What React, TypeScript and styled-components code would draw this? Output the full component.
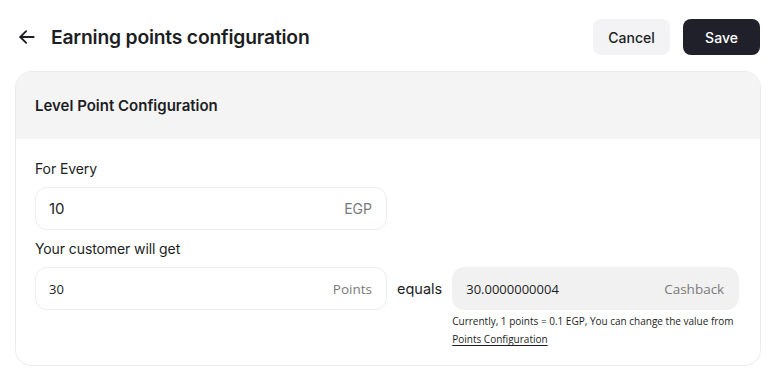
import * as React from 'react';
import styled, { createGlobalStyle } from 'styled-components';

const GlobalStyle = createGlobalStyle`
  body {
    margin: 0;
    background: #fff;
    font-family: Inter, "Liberation Sans", sans-serif;
    color: #1d1e24;
  }
`;

const Page = styled.div`
  width: 774px;
  padding: 19px 14px 0 15px;
  box-sizing: border-box;
`;

const TopBar = styled.div`
  display: flex;
  align-items: center;
  justify-content: space-between;
  height: 36px;
`;

const TitleGroup = styled.div`
  display: flex;
  align-items: center;
  gap: 14px;
  padding-left: 2px;
`;

const Title = styled.h1`
  margin: 0;
  font-size: 19.3px;
  font-weight: 600;
  letter-spacing: -0.2px;
  color: #1d1e24;
`;

const Actions = styled.div`
  display: flex;
  gap: 13px;
`;

const Button = styled.button<{ $primary?: boolean }>`
  width: 77px;
  height: 36px;
  border: none;
  border-radius: 8px;
  font-family: Inter, "Liberation Sans", sans-serif;
  font-size: 14px;
  font-weight: 500;
  cursor: pointer;
  background: ${(p) => (p.$primary ? '#1f2029' : '#f3f3f5')};
  color: ${(p) => (p.$primary ? '#ffffff' : '#1d1e24')};
`;

const Card = styled.div`
  margin-top: 16px;
  width: 746px;
  border: 1px solid #ececec;
  border-radius: 16px;
  overflow: hidden;
  box-sizing: border-box;
`;

const CardHeader = styled.div`
  background: #f4f4f4;
  height: 67px;
  display: flex;
  align-items: center;
  padding-left: 19px;
  font-size: 15px;
  font-weight: 600;
  color: #1d1e24;
`;

const CardBody = styled.div`
  padding: 21px 20px 17px 19px;
  display: flex;
  flex-direction: column;
`;

const Label = styled.div`
  font-size: 14px;
  color: #1d1e24;
  margin-bottom: 9px;
  line-height: 18px;
  letter-spacing: -0.1px;
`;

const Field = styled.div<{ $filled?: boolean; $w: number }>`
  width: ${(p) => p.$w}px;
  flex-shrink: 0;
  height: 43px;
  box-sizing: border-box;
  border-radius: 12px;
  border: 1px solid ${(p) => (p.$filled ? '#f1f1f1' : '#ececec')};
  background: ${(p) => (p.$filled ? '#f1f1f1' : '#fff')};
  display: flex;
  align-items: center;
  justify-content: space-between;
  padding: 0 14px 0 13px;
`;

const Value = styled.span<{ $small?: boolean }>`
  font-size: ${(p) => (p.$small ? '13px' : '15px')};
  font-family: ${(p) => (p.$small ? '"Open Sans", sans-serif' : 'Inter, sans-serif')};
  color: #1d1e24;
`;

const Suffix = styled.span<{ $small?: boolean }>`
  font-size: ${(p) => (p.$small ? '13.5px' : '14px')};
  font-family: ${(p) => (p.$small ? '"Open Sans", sans-serif' : 'Inter, sans-serif')};
  color: #7a7a7a;
`;

const FieldGroup = styled.div`
  display: flex;
  flex-direction: column;
  margin-bottom: 10px;
`;

const Row = styled.div`
  display: flex;
  align-items: flex-start;
  gap: 10px;
`;

const Equals = styled.span`
  height: 43px;
  display: flex;
  align-items: center;
  font-size: 14.5px;
  color: #1d1e24;
`;

const ResultCol = styled.div`
  display: flex;
  flex-direction: column;
`;

const Help = styled.div`
  margin-top: 2px;
  font-family: "Open Sans", sans-serif;
  font-size: 10px;
  line-height: 18px;
  color: #1d1e24;
  white-space: nowrap;
`;

const HelpLink = styled.a`
  color: #1d1e24;
  text-decoration: underline;
  text-underline-offset: 2px;
`;

const BackIcon = () => (
  <svg width="20" height="20" viewBox="0 0 24 24" fill="none" stroke="#1d1e24" strokeWidth="2.2" strokeLinecap="round" strokeLinejoin="round">
    <path d="M20 12H4" />
    <path d="M11 5l-7 7 7 7" />
  </svg>
);

export default function App() {
  return (
    <Page>
      <GlobalStyle />
      <TopBar>
        <TitleGroup>
          <BackIcon />
          <Title>Earning points configuration</Title>
        </TitleGroup>
        <Actions>
          <Button>Cancel</Button>
          <Button $primary>Save</Button>
        </Actions>
      </TopBar>
      <Card>
        <CardHeader>Level Point Configuration</CardHeader>
        <CardBody>
          <FieldGroup>
            <Label>For Every</Label>
            <Field $w={352}>
              <Value>10</Value>
              <Suffix>EGP</Suffix>
            </Field>
          </FieldGroup>
          <Label>Your customer will get</Label>
          <Row>
            <Field $w={352}>
              <Value $small>30</Value>
              <Suffix $small>Points</Suffix>
            </Field>
            <Equals>equals</Equals>
            <ResultCol>
              <Field $w={287} $filled>
                <Value $small>30.0000000004</Value>
                <Suffix $small>Cashback</Suffix>
              </Field>
              <Help>
                Currently, 1 points = 0.1 EGP, You can change the value from
                <br />
                <HelpLink>Points Configuration</HelpLink>
              </Help>
            </ResultCol>
          </Row>
        </CardBody>
      </Card>
    </Page>
  );
}
